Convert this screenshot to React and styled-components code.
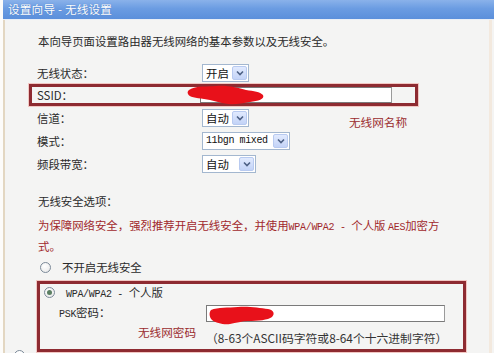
import React from "react";
import styled, { createGlobalStyle } from "styled-components";

const Global = createGlobalStyle`
  html, body { margin: 0; padding: 0; background: #fbfaf8; }
  body { font-family: "Noto Sans CJK SC", "Liberation Sans", sans-serif; }
`;

const Page = styled.div`
  width: 494px;
  height: 353px;
  overflow: hidden;
  position: relative;
  background: #f4f4f3;
  font-size: 11.4px;
  color: #2a2a2a;
  border-left: 3px solid #fdfcfa;
  box-sizing: border-box;
`;

const TitleBar = styled.div`
  height: 19px;
  margin-left: -3px;
  background: linear-gradient(#8ab2ea 0%, #6b9ce2 45%, #5b8fdb 100%);
  border-bottom: 1px solid #e9eef6;
  color: #ffffff;
  font-size: 11.6px;
  line-height: 18px;
  padding-left: 8px;
  text-shadow: 0 0 1px #3d6fb8;
  letter-spacing: 0.2px;
`;

const Panel = styled.div`
  border-left: 2px solid #e3d7c2;
  border-right: 3px solid #f3e9de;
  margin-right: 2px;
  height: 333px;
  box-sizing: border-box;
  padding-left: 32px;
  position: relative;
`;

const Intro = styled.div`
  line-height: 16px;
  padding-top: 13px;
  margin-left: 1px;
`;

const Form = styled.div`
  margin-top: 12px;
  position: relative;
`;

const Row = styled.div`
  display: flex;
  align-items: center;
  height: 23px;
`;

const Label = styled.div`
  width: ${(p) => p.$w || 165}px;
  margin-left: ${(p) => p.$ml || 0}px;
  flex: none;
  line-height: 16px;
`;

const RedBox = styled.div`
  border: 3px solid #8e2b31;
  box-shadow: 0 0 0 1px #f2c7c3;
  margin-left: -8px;
  padding-left: 5px;
  width: ${(p) => p.$w}px;
  box-sizing: border-box;
  position: relative;
`;

const SsidRow = styled.div`
  display: flex;
  align-items: center;
  height: 16px;
`;

const TextInput = styled.div`
  width: ${(p) => p.$w}px;
  height: ${(p) => p.$h}px;
  box-sizing: border-box;
  border: 1px solid #7a7a7a;
  border-right-color: #9a9a9a;
  background: #ffffff;
  position: relative;
  flex: none;
`;

const Select = styled.div`
  width: ${(p) => p.$w}px;
  height: 18px;
  box-sizing: border-box;
  border: 1px solid #a3b7cf;
  background: #ffffff;
  display: flex;
  align-items: center;
  justify-content: space-between;
  padding-left: 3px;
  padding-right: 1px;
  font-family: ${(p) => (p.$mono ? '"Liberation Mono", monospace' : "inherit")};
  font-size: ${(p) => (p.$mono ? "10px" : "inherit")};
  letter-spacing: ${(p) => (p.$mono ? "-0.4px" : "0")};
  color: #111;
`;

const ArrowBtn = styled.span`
  width: 15px;
  height: 14px;
  flex: none;
  background: linear-gradient(#e1eafe, #c3d3f7);
  border: 1px solid #b8caf0;
  box-sizing: border-box;
  border-radius: 2px;
  display: flex;
  align-items: center;
  justify-content: center;
`;

const Arrow = () => (
  <ArrowBtn>
    <svg width="8" height="6" viewBox="0 0 8 6">
      <path d="M1 1.5 L4 4.5 L7 1.5" fill="none" stroke="#4d6185" strokeWidth="1.6" />
    </svg>
  </ArrowBtn>
);

const Note = styled.div`
  position: absolute;
  left: ${(p) => p.$x}px;
  top: ${(p) => p.$y}px;
  color: #9a2c2e;
  font-size: 11.6px;
  line-height: 16px;
  white-space: nowrap;
`;

const InlineNote = styled.span`
  color: #9a2c2e;
  font-size: 11.6px;
  line-height: 16px;
  white-space: nowrap;
  margin-left: ${(p) => p.$ml}px;
  width: ${(p) => p.$w}px;
  flex: none;
`;

const Blob = styled.svg`
  position: absolute;
  left: ${(p) => p.$x}px;
  top: ${(p) => p.$y}px;
  pointer-events: none;
`;

const SectionTitle = styled.div`
  margin-top: 17px;
  line-height: 18px;
  margin-left: 1px;
`;

const Warning = styled.div`
  margin-top: 6px;
  line-height: 18px;
  color: #a1282c;
  margin-left: 1px;
`;

const RadioRow = styled.div`
  display: flex;
  align-items: center;
  height: ${(p) => p.$h || 18}px;
  margin-top: ${(p) => p.$mt || 0}px;
`;

const Radio = styled.span`
  width: 11px;
  height: 11px;
  border-radius: 50%;
  border: 1px solid #7c8a99;
  background: radial-gradient(circle at 40% 35%, #ffffff, #e6e6e6);
  box-sizing: border-box;
  display: inline-flex;
  align-items: center;
  justify-content: center;
  margin-left: ${(p) => p.$ml || 3}px;
  margin-right: 11px;
  flex: none;
  &::after {
    content: "";
    display: ${(p) => (p.$checked ? "block" : "none")};
    width: 5px;
    height: 5px;
    border-radius: 50%;
    background: #5b7f62;
  }
`;

const SecBox = styled(RedBox)`
  margin-left: 0;
  padding-left: 2px;
  margin-top: 5px;
  padding-bottom: 3px;
`;

const PskRow = styled.div`
  display: flex;
  align-items: center;
  height: 22px;
  margin-top: 2px;
`;

const HintRow = styled.div`
  display: flex;
  height: 22px;
`;

const Hint = styled.div`
  margin-top: 6px;
  line-height: 16px;
  font-size: 11.8px;
  color: #333;
  white-space: nowrap;
`;

const Mono = styled.span`
  font-family: "Liberation Mono", monospace;
  font-size: 10px;
  letter-spacing: -0.3px;
  white-space: pre;
`;

const PartialRadio = styled.span`
  position: absolute;
  left: 9px;
  top: 330px;
  width: 11px;
  height: 11px;
  border-radius: 50%;
  border: 1px solid #7c8a99;
  background: #fff;
  box-sizing: border-box;
`;

const BlobPath1 = () => (
  <Blob $x={154} $y={-3} width="80" height="22" viewBox="0 0 80 22">
    <path
      d="M3 6 C10 1 22 3 30 2 C42 1 52 4 60 6 C68 7 74 8 77 11 C79 15 72 17 64 18 C56 19 50 21 42 20 C34 19 26 16 18 15 C10 14 3 13 2 10 C1 8 2 7 3 6 Z"
      fill="#e8111a"
    />
  </Blob>
);

const BlobPath2 = () => (
  <Blob $x={1} $y={0} width="68" height="20" viewBox="0 0 68 20">
    <path
      d="M3 4 C10 1 20 2 30 1 C40 0 52 2 60 3 C66 4 67 8 64 11 C60 14 50 15 40 15 C34 15 28 17 22 18 C16 19 8 17 4 14 C1 11 1 6 3 4 Z"
      fill="#e8111a"
    />
  </Blob>
);

export default function App() {
  return (
    <>
      <Global />
      <Page>
        <TitleBar>设置向导 - 无线设置</TitleBar>
        <Panel>
          <Intro>本向导页面设置路由器无线网络的基本参数以及无线安全。</Intro>
          <Form>
            <Row>
              <Label>无线状态：</Label>
              <Select $w={47}>
                开启
                <Arrow />
              </Select>
            </Row>
            <RedBox $w={389}>
              <SsidRow>
                <Label $w={163}>SSID：</Label>
                <TextInput $w={192} $h={16} />
                <BlobPath1 />
              </SsidRow>
            </RedBox>
            <Row>
              <Label>信道：</Label>
              <Select $w={47}>
                自动
                <Arrow />
              </Select>
            </Row>
            <Row>
              <Label>模式：</Label>
              <Select $w={88} $mono>
                11bgn mixed
                <Arrow />
              </Select>
            </Row>
            <Row>
              <Label>频段带宽：</Label>
              <Select $w={54}>
                自动
                <Arrow />
              </Select>
            </Row>
            <Note $x={312} $y={53}>无线网名称</Note>
          </Form>
          <SectionTitle>无线安全选项：</SectionTitle>
          <Warning>
            为保障网络安全，强烈推荐开启无线安全，并使用<Mono>WPA/WPA2 - </Mono>个人版 <Mono>AES</Mono>加密方
            <br />
            式。
          </Warning>
          <RadioRow $mt={3}>
            <Radio />
            <span>不开启无线安全</span>
          </RadioRow>
          <SecBox $w={429}>
            <RadioRow $h={16}>
              <Radio $ml={2} $checked />
              <span>
                <Mono>WPA/WPA2 - </Mono>个人版
              </span>
            </RadioRow>
            <PskRow>
              <Label $w={147} $ml={17}>
                <Mono>PSK</Mono>密码：
              </Label>
              <TextInput $w={239} $h={17}>
                <BlobPath2 />
              </TextInput>
            </PskRow>
            <HintRow>
              <InlineNote $ml={96} $w={68}>无线网密码</InlineNote>
              <Hint>（8-63个ASCII码字符或8-64个十六进制字符）</Hint>
            </HintRow>
          </SecBox>
          <PartialRadio />
        </Panel>
      </Page>
    </>
  );
}
